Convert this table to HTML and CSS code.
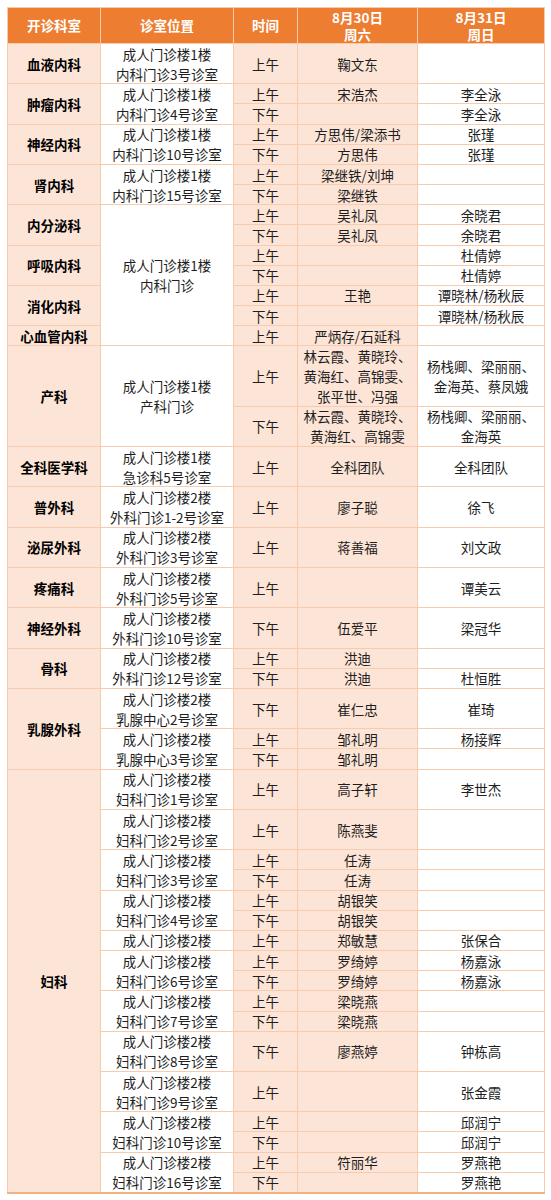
FILE: index.html
```html
<!DOCTYPE html>
<html lang="zh-CN">
<head>
<meta charset="utf-8">
<title>门诊排班表</title>
<link rel="stylesheet" href="styles.css">
</head>
<body>
<div class="sheet">
  <div class="c hd">开诊科室</div>
  <div class="c hd">诊室位置</div>
  <div class="c hd">时间</div>
  <div class="c hd">8月30日<br>周六</div>
  <div class="c hd">8月31日<br>周日</div>

  <!-- 血液内科 -->
  <div class="c dept r2">血液内科</div>
  <div class="c loc r2">成人门诊楼1楼<br>内科门诊3号诊室</div>
  <div class="c time r2">上午</div>
  <div class="c d30 r2">鞠文东</div>
  <div class="c d31 r2"></div>

  <!-- 肿瘤内科 -->
  <div class="c dept r2">肿瘤内科</div>
  <div class="c loc r2">成人门诊楼1楼<br>内科门诊4号诊室</div>
  <div class="c time">上午</div>
  <div class="c d30">宋浩杰</div>
  <div class="c d31">李全泳</div>
  <div class="c time">下午</div>
  <div class="c d30"></div>
  <div class="c d31">李全泳</div>

  <!-- 神经内科 -->
  <div class="c dept r2">神经内科</div>
  <div class="c loc r2">成人门诊楼1楼<br>内科门诊10号诊室</div>
  <div class="c time">上午</div>
  <div class="c d30">方思伟/梁添书</div>
  <div class="c d31">张瑾</div>
  <div class="c time">下午</div>
  <div class="c d30">方思伟</div>
  <div class="c d31">张瑾</div>

  <!-- 肾内科 -->
  <div class="c dept r2">肾内科</div>
  <div class="c loc r2">成人门诊楼1楼<br>内科门诊15号诊室</div>
  <div class="c time">上午</div>
  <div class="c d30">梁继铁/刘坤</div>
  <div class="c d31"></div>
  <div class="c time">下午</div>
  <div class="c d30">梁继铁</div>
  <div class="c d31"></div>

  <!-- 内分泌科 -->
  <div class="c dept r2">内分泌科</div>
  <div class="c loc r7">成人门诊楼1楼<br>内科门诊</div>
  <div class="c time">上午</div>
  <div class="c d30">吴礼凤</div>
  <div class="c d31">余晓君</div>
  <div class="c time">下午</div>
  <div class="c d30">吴礼凤</div>
  <div class="c d31">余晓君</div>

  <!-- 呼吸内科 -->
  <div class="c dept r2">呼吸内科</div>
  <div class="c time">上午</div>
  <div class="c d30"></div>
  <div class="c d31">杜倩婷</div>
  <div class="c time">下午</div>
  <div class="c d30"></div>
  <div class="c d31">杜倩婷</div>

  <!-- 消化内科 -->
  <div class="c dept r2">消化内科</div>
  <div class="c time">上午</div>
  <div class="c d30">王艳</div>
  <div class="c d31">谭晓林/杨秋辰</div>
  <div class="c time">下午</div>
  <div class="c d30"></div>
  <div class="c d31">谭晓林/杨秋辰</div>

  <!-- 心血管内科 -->
  <div class="c dept">心血管内科</div>
  <div class="c time">上午</div>
  <div class="c d30">严炳存/石延科</div>
  <div class="c d31"></div>

  <!-- 产科 -->
  <div class="c dept r5">产科</div>
  <div class="c loc r5">成人门诊楼1楼<br>产科门诊</div>
  <div class="c time r3">上午</div>
  <div class="c d30 r3">林云霞、黄晓玲、<br>黄海红、高锦雯、<br>张平世、冯强</div>
  <div class="c d31 r3">杨栈卿、梁丽丽、<br>金海英、蔡凤娥</div>
  <div class="c time r2">下午</div>
  <div class="c d30 r2">林云霞、黄晓玲、<br>黄海红、高锦雯</div>
  <div class="c d31 r2">杨栈卿、梁丽丽、<br>金海英</div>

  <!-- 全科医学科 -->
  <div class="c dept r2">全科医学科</div>
  <div class="c loc r2">成人门诊楼1楼<br>急诊科5号诊室</div>
  <div class="c time r2">上午</div>
  <div class="c d30 r2">全科团队</div>
  <div class="c d31 r2">全科团队</div>

  <!-- 普外科 -->
  <div class="c dept r2">普外科</div>
  <div class="c loc r2">成人门诊楼2楼<br>外科门诊1-2号诊室</div>
  <div class="c time r2">上午</div>
  <div class="c d30 r2">廖子聪</div>
  <div class="c d31 r2">徐飞</div>

  <!-- 泌尿外科 -->
  <div class="c dept r2">泌尿外科</div>
  <div class="c loc r2">成人门诊楼2楼<br>外科门诊3号诊室</div>
  <div class="c time r2">上午</div>
  <div class="c d30 r2">蒋善福</div>
  <div class="c d31 r2">刘文政</div>

  <!-- 疼痛科 -->
  <div class="c dept r2">疼痛科</div>
  <div class="c loc r2">成人门诊楼2楼<br>外科门诊5号诊室</div>
  <div class="c time r2">上午</div>
  <div class="c d30 r2"></div>
  <div class="c d31 r2">谭美云</div>

  <!-- 神经外科 -->
  <div class="c dept r2">神经外科</div>
  <div class="c loc r2">成人门诊楼2楼<br>外科门诊10号诊室</div>
  <div class="c time r2">下午</div>
  <div class="c d30 r2">伍爱平</div>
  <div class="c d31 r2">梁冠华</div>

  <!-- 骨科 -->
  <div class="c dept r2">骨科</div>
  <div class="c loc r2">成人门诊楼2楼<br>外科门诊12号诊室</div>
  <div class="c time">上午</div>
  <div class="c d30">洪迪</div>
  <div class="c d31"></div>
  <div class="c time">下午</div>
  <div class="c d30">洪迪</div>
  <div class="c d31">杜恒胜</div>

  <!-- 乳腺外科 -->
  <div class="c dept r4">乳腺外科</div>
  <div class="c loc r2">成人门诊楼2楼<br>乳腺中心2号诊室</div>
  <div class="c time r2">下午</div>
  <div class="c d30 r2">崔仁忠</div>
  <div class="c d31 r2">崔琦</div>
  <div class="c loc r2">成人门诊楼2楼<br>乳腺中心3号诊室</div>
  <div class="c time">上午</div>
  <div class="c d30">邹礼明</div>
  <div class="c d31">杨接辉</div>
  <div class="c time">下午</div>
  <div class="c d30">邹礼明</div>
  <div class="c d31"></div>

  <!-- 妇科 -->
  <div class="c dept r21">妇科</div>
  <div class="c loc r2">成人门诊楼2楼<br>妇科门诊1号诊室</div>
  <div class="c time r2">上午</div>
  <div class="c d30 r2">高子轩</div>
  <div class="c d31 r2">李世杰</div>

  <div class="c loc r2">成人门诊楼2楼<br>妇科门诊2号诊室</div>
  <div class="c time r2">上午</div>
  <div class="c d30 r2">陈燕斐</div>
  <div class="c d31 r2"></div>

  <div class="c loc r2">成人门诊楼2楼<br>妇科门诊3号诊室</div>
  <div class="c time">上午</div>
  <div class="c d30">任涛</div>
  <div class="c d31"></div>
  <div class="c time">下午</div>
  <div class="c d30">任涛</div>
  <div class="c d31"></div>

  <div class="c loc r2">成人门诊楼2楼<br>妇科门诊4号诊室</div>
  <div class="c time">上午</div>
  <div class="c d30">胡银笑</div>
  <div class="c d31"></div>
  <div class="c time">下午</div>
  <div class="c d30">胡银笑</div>
  <div class="c d31"></div>

  <div class="c loc">成人门诊楼2楼</div>
  <div class="c time">上午</div>
  <div class="c d30">郑敏慧</div>
  <div class="c d31">张保合</div>

  <div class="c loc r2">成人门诊楼2楼<br>妇科门诊6号诊室</div>
  <div class="c time">上午</div>
  <div class="c d30">罗绮婷</div>
  <div class="c d31">杨嘉泳</div>
  <div class="c time">下午</div>
  <div class="c d30">罗绮婷</div>
  <div class="c d31">杨嘉泳</div>

  <div class="c loc r2">成人门诊楼2楼<br>妇科门诊7号诊室</div>
  <div class="c time">上午</div>
  <div class="c d30">梁晓燕</div>
  <div class="c d31"></div>
  <div class="c time">下午</div>
  <div class="c d30">梁晓燕</div>
  <div class="c d31"></div>

  <div class="c loc r2">成人门诊楼2楼<br>妇科门诊8号诊室</div>
  <div class="c time r2">下午</div>
  <div class="c d30 r2">廖燕婷</div>
  <div class="c d31 r2">钟栋高</div>

  <div class="c loc r2">成人门诊楼2楼<br>妇科门诊9号诊室</div>
  <div class="c time r2">上午</div>
  <div class="c d30 r2"></div>
  <div class="c d31 r2">张金霞</div>

  <div class="c loc r2">成人门诊楼2楼<br>妇科门诊10号诊室</div>
  <div class="c time">上午</div>
  <div class="c d30"></div>
  <div class="c d31">邱润宁</div>
  <div class="c time">下午</div>
  <div class="c d30"></div>
  <div class="c d31">邱润宁</div>

  <div class="c loc r2">成人门诊楼2楼<br>妇科门诊16号诊室</div>
  <div class="c time">上午</div>
  <div class="c d30">符丽华</div>
  <div class="c d31">罗燕艳</div>
  <div class="c time">下午</div>
  <div class="c d30"></div>
  <div class="c d31">罗燕艳</div>
</div>
</body>
</html>
```

FILE: styles.css
```css
html, body {
  margin: 0;
  padding: 0;
  background: #ffffff;
}

body {
  font-family: "Noto Sans CJK SC", "Noto Sans", sans-serif;
  font-size: 13.5px;
  color: #1e1e1e;
}

.sheet {
  margin: 7px 0 0 7px;
  width: 536px;
  display: grid;
  grid-template-columns: 92px 132px 63px 119px 126px;
  grid-template-rows: 35px;
  grid-auto-rows: 19.16px;
  gap: 1px;
  padding: 1px 1px 0 1px;
  background: #f8cbad;
  border-bottom: 2px solid #f4b183;
}

.c {
  display: flex;
  align-items: center;
  justify-content: center;
  text-align: center;
  line-height: 20px;
  white-space: nowrap;
  background: #ffffff;
}

.hd {
  background: #ed7d31;
  color: #ffffff;
  font-weight: 700;
  line-height: 17px;
}

.dept {
  background: #fce4d6;
  font-weight: 700;
  color: #000000;
}

.loc { background: #ffffff; }
.time { background: #fce4d6; }
.d30 { background: #fce4d6; }
.d31 { background: #ffffff; }

.r2 { grid-row: span 2; }
.r3 { grid-row: span 3; }
.r4 { grid-row: span 4; }
.r5 { grid-row: span 5; }
.r7 { grid-row: span 7; }
.r21 { grid-row: span 21; }
```
